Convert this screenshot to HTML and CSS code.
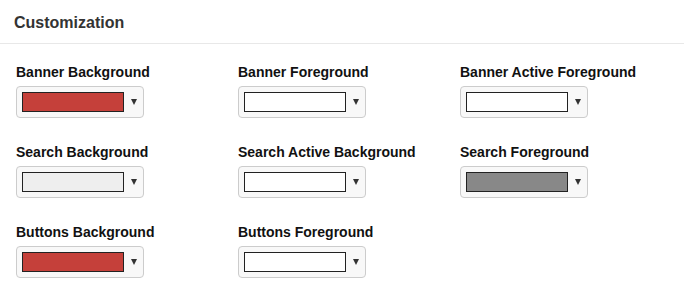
FILE: index.html
```html
<!DOCTYPE html>
<html lang="en">
<head>
  <meta charset="UTF-8">
  <title>Customization</title>
  <link rel="stylesheet" href="styles.css">
</head>
<body>

  <div class="panel-header">Customization</div>

  <div class="color-grid">
    <div class="field">
      <div class="field-label">Banner Background</div>
      <button class="picker"><span class="swatch swatch-red"></span><span class="caret"></span></button>
    </div>
    <div class="field">
      <div class="field-label">Banner Foreground</div>
      <button class="picker"><span class="swatch swatch-white"></span><span class="caret"></span></button>
    </div>
    <div class="field">
      <div class="field-label">Banner Active Foreground</div>
      <button class="picker"><span class="swatch swatch-white"></span><span class="caret"></span></button>
    </div>

    <div class="field">
      <div class="field-label">Search Background</div>
      <button class="picker"><span class="swatch swatch-light"></span><span class="caret"></span></button>
    </div>
    <div class="field">
      <div class="field-label">Search Active Background</div>
      <button class="picker"><span class="swatch swatch-white"></span><span class="caret"></span></button>
    </div>
    <div class="field">
      <div class="field-label">Search Foreground</div>
      <button class="picker"><span class="swatch swatch-grey"></span><span class="caret"></span></button>
    </div>

    <div class="field">
      <div class="field-label">Buttons Background</div>
      <button class="picker"><span class="swatch swatch-red"></span><span class="caret"></span></button>
    </div>
    <div class="field">
      <div class="field-label">Buttons Foreground</div>
      <button class="picker"><span class="swatch swatch-white"></span><span class="caret"></span></button>
    </div>
  </div>

</body>
</html>
```

FILE: styles.css
```css
body {
  margin: 0;
  font-family: 'Liberation Sans', Arial, Helvetica, sans-serif;
  background: #fff;
  color: #111;
}
.panel-header {
  padding: 13px 14px 10px;
  font-size: 16px;
  line-height: 20px;
  font-weight: bold;
  color: #333;
  border-bottom: 1px solid #e8e8e8;
}
.color-grid {
  display: grid;
  grid-template-columns: repeat(3, 222px);
  row-gap: 26px;
  padding: 20px 16px;
}
.field-label {
  font-size: 14px;
  line-height: 16px;
  font-weight: bold;
  color: #111;
  margin-bottom: 6px;
}
.picker {
  display: flex;
  align-items: center;
  box-sizing: border-box;
  width: 128px;
  height: 32px;
  padding: 5px;
  margin: 0;
  background: #f8f8f8;
  border: 1px solid #ccc;
  border-radius: 4px;
  cursor: pointer;
}
.swatch {
  display: block;
  box-sizing: border-box;
  width: 102px;
  height: 20px;
  border: 1px solid #222;
}
.swatch-red { background: #c5403a; }
.swatch-white { background: #fff; }
.swatch-light { background: #eeeeee; }
.swatch-grey { background: #888; }
.caret {
  display: block;
  width: 0;
  height: 0;
  margin-left: 7px;
  border-left: 3.5px solid transparent;
  border-right: 3.5px solid transparent;
  border-top: 6px solid #333;
}
```
